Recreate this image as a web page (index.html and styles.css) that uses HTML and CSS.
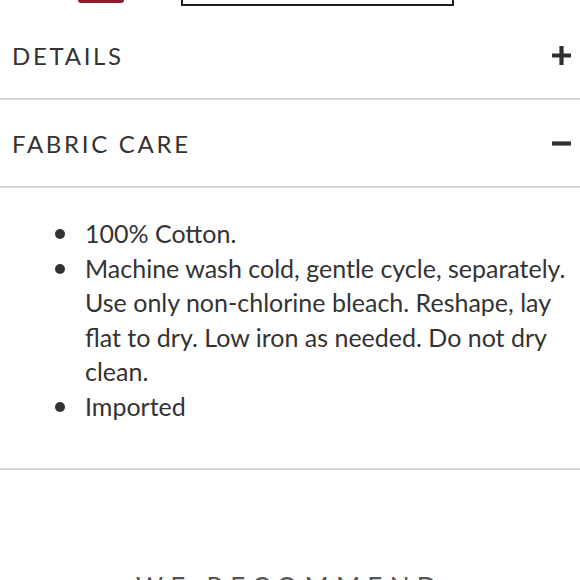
FILE: index.html
```html
<!DOCTYPE html>
<html lang="en">
<head>
<meta charset="utf-8">
<title>Fabric care</title>
<link rel="stylesheet" href="styles.css">
</head>
<body>
<div class="page">
  <div class="top">
    <div class="swatch"></div>
    <div class="size-box"></div>
  </div>
  <div class="acc-row">
    <span class="acc-title">DETAILS</span>
    <svg class="acc-icon" viewBox="0 0 20 20" aria-hidden="true"><path d="M10 1v18M1 10h18" stroke="#2f2f2f" stroke-width="4" fill="none"/></svg>
  </div>
  <div class="acc-row">
    <span class="acc-title">FABRIC CARE</span>
    <svg class="acc-icon" viewBox="0 0 20 20" aria-hidden="true"><path d="M1 10h18" stroke="#2f2f2f" stroke-width="4" fill="none"/></svg>
  </div>
  <div class="acc-body">
    <ul class="care-list">
      <li>100% Cotton.</li>
      <li>Machine wash cold, gentle cycle, separately. Use only non-chlorine bleach. Reshape, lay flat to dry. Low iron as needed. Do not dry clean.</li>
      <li>Imported</li>
    </ul>
  </div>
  <h2 class="recommend">WE RECOMMEND</h2>
</div>
</body>
</html>
```

FILE: styles.css
```css
html, body {
  margin: 0;
  padding: 0;
  background: #ffffff;
}

.page {
  font-family: Lato, "Open Sans", sans-serif;
  color: #2f2f2f;
  width: 580px;
  overflow: hidden;
}

.top {
  display: flex;
  align-items: flex-start;
  height: 12px;
}

.swatch {
  margin-left: 78px;
  width: 46px;
  height: 3px;
  background: #8c1d2e;
  border-radius: 0 0 8px 8px;
}

.size-box {
  margin-left: 57px;
  width: 269px;
  height: 4px;
  border: 2px solid #1f1f1f;
  border-top: none;
}

.acc-row {
  display: flex;
  align-items: center;
  justify-content: space-between;
  height: 86px;
  padding: 0 8px 0 12px;
  border-bottom: 2px solid #d6d6d6;
}

.acc-title {
  font-size: 24px;
  letter-spacing: 2.7px;
  color: #333333;
}

.acc-icon {
  width: 21px;
  height: 21px;
  display: block;
}

.acc-body {
  padding: 28px 4px 45px 55px;
  border-bottom: 2px solid #d6d6d6;
}

.care-list {
  list-style: none;
  margin: 0;
  padding: 0;
}

.care-list li {
  display: flex;
  gap: 21px;
  font-size: 25px;
  line-height: 34.5px;
  color: #333333;
}

.care-list li::before {
  content: "";
  flex: 0 0 10px;
  width: 10px;
  height: 10px;
  margin-top: 13px;
  border-radius: 50%;
  background: #333333;
}

.care-list li {
  gap: 20px;
}

.recommend {
  margin: 102px 0 0;
  text-align: center;
  font-size: 26px;
  font-weight: 400;
  letter-spacing: 7.3px;
  line-height: 31px;
  color: #555555;
}
```
